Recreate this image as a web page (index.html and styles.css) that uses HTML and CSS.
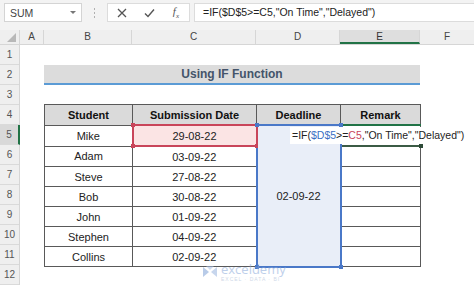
FILE: index.html
```html
<!DOCTYPE html>
<html lang="en">
<head>
    <meta charset="UTF-8">
    <meta name="viewport" content="width=device-width, initial-scale=1.0">
    <title>Using IF Function</title>
    <link rel="stylesheet" href="styles.css">
</head>
<body>
    <div class="toolbar">
        <div class="name-box">
            <span>SUM</span>
            <span class="caret"></span>
        </div>
        <div class="grip"><i></i><i></i><i></i></div>
        <div class="fx-buttons">
            <svg width="10" height="10" viewBox="0 0 10 10"><path d="M1 1 L9 9 M9 1 L1 9" stroke="#555" stroke-width="1.3" fill="none"/></svg>
            <svg width="11" height="10" viewBox="0 0 11 10"><path d="M1 5.5 L4 8.5 L10 1.5" stroke="#555" stroke-width="1.4" fill="none"/></svg>
            <span class="fx">f<sub>x</sub></span>
        </div>
        <div class="formula">=IF($D$5&gt;=C5,"On Time","Delayed")</div>
    </div>

    <div class="sheet">
        <div class="col-heads">
            <div class="corner"><span class="tri"></span></div>
            <div class="ch col-a">A</div>
            <div class="ch col-b">B</div>
            <div class="ch col-c">C</div>
            <div class="ch col-d">D</div>
            <div class="ch col-e active">E</div>
            <div class="ch col-f">F</div>
        </div>

        <div class="body">
            <div class="row-heads">
                <div class="rh">1</div>
                <div class="rh">2</div>
                <div class="rh">3</div>
                <div class="rh">4</div>
                <div class="rh active">5</div>
                <div class="rh">6</div>
                <div class="rh">7</div>
                <div class="rh">8</div>
                <div class="rh">9</div>
                <div class="rh">10</div>
                <div class="rh">11</div>
                <div class="rh">12</div>
            </div>

            <div class="cells">
                <div class="title">Using IF Function</div>

                <table class="data">
                    <colgroup>
                        <col class="w-b">
                        <col class="w-c">
                        <col class="w-d">
                        <col class="w-e">
                    </colgroup>
                    <tr class="head">
                        <th>Student</th>
                        <th>Submission Date</th>
                        <th>Deadline</th>
                        <th>Remark</th>
                    </tr>
                    <tr>
                        <td>Mike</td>
                        <td class="ref-c">29-08-22<i class="hd tl"></i><i class="hd tr"></i><i class="hd bl"></i><i class="hd br"></i></td>
                        <td class="ref-d" rowspan="7">02-09-22<i class="hd tl"></i><i class="hd tr"></i><i class="hd bl"></i><i class="hd br"></i></td>
                        <td class="editing"><i class="hd br"></i></td>
                    </tr>
                    <tr><td>Adam</td><td>03-09-22</td><td></td></tr>
                    <tr><td>Steve</td><td>27-08-22</td><td></td></tr>
                    <tr><td>Bob</td><td>30-08-22</td><td></td></tr>
                    <tr><td>John</td><td>01-09-22</td><td></td></tr>
                    <tr><td>Stephen</td><td>04-09-22</td><td></td></tr>
                    <tr><td>Collins</td><td>02-09-22</td><td></td></tr>
                </table>

                <!-- in-cell edit box over E5 -->
                <div class="cell-edit">=IF(<span class="ref-blue">$D$5</span>&gt;=<span class="ref-red">C5</span>,"On Time","Delayed")</div>

                <div class="watermark">
                    <svg width="16" height="14" viewBox="0 0 16 14">
                        <path d="M1 2 L7 7 L1 12 Z" fill="#7fa2d6"/>
                        <path d="M15 2 L9 7 L15 12 Z" fill="#9bb6e0"/>
                        <path d="M4 1 L12 1 L8 5 Z" fill="#a9c0e6"/>
                    </svg>
                    <div>
                        <div class="wm-name">exceldemy</div>
                        <div class="wm-sub">EXCEL · DATA · BI</div>
                    </div>
                </div>
            </div>
        </div>
    </div>
</body>
</html>
```

FILE: styles.css
```css
/* Base */
body {
    margin: 0;
    width: 474px;
    height: 285px;
    overflow: hidden;
    background-color: #ffffff;
    font-family: "Liberation Sans", Arial, sans-serif;
    color: #222;
}

/* Formula bar */
.toolbar {
    height: 30px;
    box-sizing: border-box;
    padding-top: 3px;
    padding-left: 4px;
    display: flex;
    align-items: flex-start;
    background-color: #f3f3f3;
}

.name-box {
    width: 78px;
    height: 19px;
    box-sizing: border-box;
    border: 1px solid #d4d4d4;
    background-color: #fff;
    display: flex;
    align-items: center;
    justify-content: space-between;
    padding: 0 5px 0 5px;
    font-size: 10.5px;
    color: #444;
}

.caret {
    width: 0;
    height: 0;
    border-left: 3px solid transparent;
    border-right: 3px solid transparent;
    border-top: 3px solid #777;
}

.grip {
    width: 25px;
    height: 19px;
    display: flex;
    flex-direction: column;
    align-items: center;
    justify-content: center;
    gap: 2px;
}

.grip i {
    width: 1px;
    height: 2px;
    background-color: #b0b0b0;
}

.fx-buttons {
    width: 83px;
    height: 19px;
    box-sizing: border-box;
    border: 1px solid #dcdcdc;
    background-color: #fff;
    display: flex;
    align-items: center;
    justify-content: space-between;
    padding: 0 10px 0 9px;
}

.fx {
    font-family: "Liberation Serif", serif;
    font-style: italic;
    font-size: 11px;
    color: #555;
}

.fx sub {
    font-size: 7px;
}

.formula {
    flex: 1;
    height: 19px;
    box-sizing: border-box;
    margin-left: 4px;
    border: 1px solid #dcdcdc;
    border-right: none;
    background-color: #fff;
    padding-left: 8px;
    font-size: 10.5px;
    line-height: 17px;
    color: #222;
}

/* Headers */
.col-heads {
    display: flex;
    height: 15px;
    background-color: #efefef;
    border-bottom: 1px solid #d6d6d6;
    box-sizing: border-box;
}

.corner {
    width: 20px;
    position: relative;
    border-right: 1px solid #d6d6d6;
    box-sizing: border-box;
}

.tri {
    position: absolute;
    right: 3px;
    bottom: 2px;
    width: 0;
    height: 0;
    border-left: 9px solid transparent;
    border-bottom: 9px solid #b8b8b8;
}

.ch {
    box-sizing: border-box;
    border-right: 1px solid #d6d6d6;
    font-size: 10px;
    color: #444;
    text-align: center;
    line-height: 14px;
}

.ch.active {
    background-color: #dedede;
    border-bottom: 2px solid #217346;
    color: #333;
}

.col-a { width: 24px; }
.col-b { width: 88px; }
.col-c { width: 124px; }
.col-d { width: 84px; }
.col-e { width: 80px; }
.col-f { width: 54px; border-right: none; }

.body {
    display: flex;
}

.row-heads {
    width: 20px;
    background-color: #efefef;
    border-right: 1px solid #d6d6d6;
    box-sizing: border-box;
}

.rh {
    height: 20px;
    box-sizing: border-box;
    border-bottom: 1px solid #dadada;
    font-size: 10px;
    color: #555;
    text-align: center;
    line-height: 20px;
}

.rh.active {
    background-color: #d9d9d9;
    border-right: 2px solid #217346;
    margin-right: -1px;
}

/* Cell area */
.cells {
    position: relative;
    display: grid;
    grid-template-columns: 24px 88px 124px 84px 80px 54px;
    grid-template-rows: repeat(12, 20px);
}

.title {
    grid-row: 2;
    grid-column: 2 / 6;
    background-color: #dcdcdc;
    border-bottom: 2px solid #5b9bd5;
    font-size: 12px;
    font-weight: bold;
    color: #44546a;
    text-align: center;
    line-height: 19px;
}

.data {
    grid-row: 4 / 12;
    grid-column: 2 / 6;
    border-collapse: collapse;
    table-layout: fixed;
    width: 376px;
    height: 161px;
    margin-top: -1px;
    font-size: 11px;
}

.w-b { width: 88px; }
.w-c { width: 124px; }
.w-d { width: 84px; }
.w-e { width: 80px; }

.data th,
.data td {
    border: 1px solid #595959;
    padding: 0;
    height: 19px;
    text-align: center;
    position: relative;
}

.data th {
    background-color: #dadada;
    font-weight: bold;
    color: #111;
}

.data td.ref-c {
    background-color: #fbe4e4;
    border: 2px solid #c9455a;
}

.data td.ref-d {
    background-color: #e9eef8;
    border: 2px solid #4a78c8;
}

.data td.editing {
    border-top: 2px solid #217346;
    border-bottom: 2px solid #3b5b45;
}

/* selection handles */
.hd {
    position: absolute;
    width: 4px;
    height: 4px;
}

.ref-c .hd { background-color: #c9455a; }
.ref-d .hd { background-color: #4a78c8; }
.editing .hd { background-color: #2d4a37; }

.hd.tl { top: -3px; left: -3px; }
.hd.tr { top: -3px; right: -3px; }
.hd.bl { bottom: -3px; left: -3px; }
.hd.br { bottom: -3px; right: -3px; }

.cell-edit {
    position: absolute;
    left: 270px;
    top: 82px;
    width: 182px;
    height: 17px;
    background-color: #fff;
    font-size: 10.5px;
    line-height: 17px;
    padding-left: 2px;
    color: #222;
}

.ref-blue { color: #3a6fc4; }
.ref-red { color: #c9455a; }

.watermark {
    position: absolute;
    left: 182px;
    top: 217px;
    display: flex;
    align-items: center;
    gap: 3px;
    opacity: 0.55;
}

.wm-name {
    font-family: "Open Sans", sans-serif;
    font-size: 13px;
    line-height: 14px;
    color: #8aa9da;
}

.wm-sub {
    font-size: 5px;
    letter-spacing: 1px;
    color: #a9b9d4;
}
```
